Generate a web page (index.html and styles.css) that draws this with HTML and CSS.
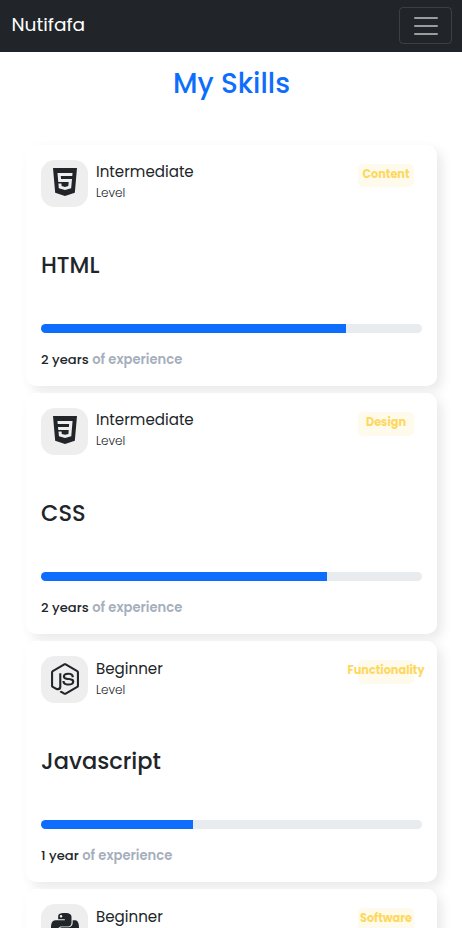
FILE: index.html
```html
<!DOCTYPE html>
<html lang="en">
<head>
<meta charset="utf-8">
<title>My Skills</title>
<link rel="stylesheet" href="styles.css">
</head>
<body>
<nav class="navbar">
  <a class="brand">Nutifafa</a>
  <button class="toggler" aria-label="Menu">
    <svg viewBox="0 0 30 30"><path stroke="currentColor" stroke-linecap="round" stroke-miterlimit="10" stroke-width="2" d="M4 7h22M4 15h22M4 23h22"/></svg>
  </button>
</nav>
<main>
  <h1 class="title">My Skills</h1>
  <div class="cards">
    <article class="card">
      <header class="head">
        <div class="icon"><svg viewBox="0 0 384 512"><path d="M0 32l34.9 395.8L191.5 480l157.6-52.2L384 32H0zm308.2 127.9H124.4l4.1 49.4h175.6l-13.6 148.4-97.9 27v.3h-1.1l-98.7-27.3-6-75.8h47.7L138 320l53.5 14.5 53.7-14.5 6-62.2H84.3L71.5 112.2h241.1l-4.4 47.7z"/></svg></div>
        <div class="details"><h6 class="grade">Intermediate</h6><p class="level">Level</p></div>
        <div class="badge">Content</div>
      </header>
      <h3 class="name">HTML</h3>
      <div class="progress"><div class="bar" style="width:80%"></div></div>
      <p class="exp">2 years <span>of experience</span></p>
    </article>
    <article class="card">
      <header class="head">
        <div class="icon"><svg viewBox="0 0 384 512"><path fill-rule="evenodd" d="M0 32l34.9 395.8L192 480l157.1-52.2L384 32H0zM71 112H313L292 355 193 384 95 355 88 281H137L140 319 193 333 247 318 251 257H84L80 209H254L258 159H75z"/></svg></div>
        <div class="details"><h6 class="grade">Intermediate</h6><p class="level">Level</p></div>
        <div class="badge">Design</div>
      </header>
      <h3 class="name">CSS</h3>
      <div class="progress"><div class="bar" style="width:75%"></div></div>
      <p class="exp">2 years <span>of experience</span></p>
    </article>
    <article class="card lower">
      <header class="head">
        <div class="icon"><svg viewBox="0 0 448 512"><path d="M224 508c-6.7 0-13.5-1.8-19.4-5.2l-61.7-36.5c-9.2-5.2-4.7-7-1.7-8 12.3-4.3 14.8-5.2 27.9-12.7 1.4-.8 3.2-.5 4.6.4l47.4 28.1c1.7 1 4.1 1 5.7 0l184.7-106.6c1.7-1 2.8-3 2.8-5V149.3c0-2.1-1.1-4-2.9-5.1L226.8 37.7c-1.7-1-4-1-5.7 0L36.6 144.3c-1.8 1-2.9 3-2.9 5.1v213.1c0 2 1.1 4 2.9 4.9l50.6 29.2c27.5 13.7 44.3-2.4 44.3-18.7V167.5c0-3 2.4-5.3 5.4-5.3h23.4c2.9 0 5.4 2.3 5.4 5.3V378c0 36.6-20 57.6-54.7 57.6-10.7 0-19.1 0-42.5-11.6l-48.4-27.9C8.1 389.2.7 376.3.7 362.4V149.3c0-13.8 7.4-26.8 19.4-33.7L204.6 9c11.7-6.6 27.2-6.6 38.8 0l184.7 106.7c12 6.9 19.4 19.8 19.4 33.7v213.1c0 13.8-7.4 26.7-19.4 33.7L243.4 502.8c-5.9 3.4-12.6 5.2-19.4 5.2zm149.1-210.1c0-39.9-27-50.5-83.7-58-57.4-7.6-63.2-11.5-63.2-24.9 0-11.1 4.9-25.9 47.4-25.9 37.9 0 51.9 8.2 57.7 33.8.5 2.4 2.7 4.2 5.2 4.2h24c1.5 0 2.9-.6 3.9-1.7s1.5-2.6 1.4-4.1c-3.7-44.1-33-64.6-92.2-64.6-52.7 0-84.1 22.2-84.1 59.5 0 40.4 31.3 51.6 81.8 56.6 60.5 5.9 65.2 14.8 65.2 26.7 0 20.6-16.6 29.4-55.5 29.4-48.9 0-59.6-12.3-63.2-36.6-.4-2.6-2.6-4.5-5.3-4.5h-23.9c-3 0-5.3 2.4-5.3 5.3 0 31.1 16.9 68.2 97.8 68.2 58.4-.1 92-23.2 92-63.4z"/></svg></div>
        <div class="details"><h6 class="grade">Beginner</h6><p class="level">Level</p></div>
        <div class="badge">Functionality</div>
      </header>
      <h3 class="name">Javascript</h3>
      <div class="progress"><div class="bar" style="width:40%"></div></div>
      <p class="exp">1 year <span>of experience</span></p>
    </article>
    <article class="card lower">
      <header class="head">
        <div class="icon"><svg viewBox="0 0 448 512"><path d="M439.8 200.5c-7.7-30.9-22.3-54.2-53.4-54.2h-40.1v47.4c0 36.8-31.2 67.8-66.8 67.8H172.7c-29.2 0-53.4 25-53.4 54.3v101.8c0 29 25.2 46 53.4 54.3 33.8 9.9 66.3 11.7 106.8 0 26.9-7.8 53.4-23.5 53.4-54.3v-40.7H226.2v-13.6h160.2c31.1 0 42.6-21.7 53.4-54.2 11.2-33.5 10.7-65.7 0-108.6zM286.2 404c11.1 0 20.1 9.1 20.1 20.3 0 11.3-9 20.4-20.1 20.4-11 0-20.1-9.2-20.1-20.4.1-11.3 9.1-20.3 20.1-20.3zM167.8 248.1h106.8c29.7 0 53.4-24.5 53.4-54.3V91.9c0-29-24.4-50.7-53.4-55.6-35.8-5.9-74.7-5.6-106.8.1-45.2 8-53.4 24.7-53.4 55.6v40.7h106.9v13.6h-147c-31.1 0-58.3 18.7-66.8 54.2-9.8 40.7-10.2 66.1 0 108.6 7.6 31.6 25.7 54.2 56.8 54.2H101v-48.8c0-35.3 30.5-66.4 66.8-66.4zm-6.7-142.6c-11.1 0-20.1-9.1-20.1-20.3.1-11.3 9-20.4 20.1-20.4 11 0 20.1 9.2 20.1 20.4s-9 20.3-20.1 20.3z"/></svg></div>
        <div class="details"><h6 class="grade">Beginner</h6></div>
        <div class="badge">Software</div>
      </header>
    </article>
  </div>
</main>
</body>
</html>
```
FILE: styles.css
```css
* { box-sizing: border-box; }
html { height: 928px; overflow: hidden; }
body {
  margin: 0;
  height: 928px;
  overflow: hidden;
  background: #fff;
  color: #212529;
  font-family: Poppins, Inter, "Liberation Sans", sans-serif;
}
h1, h3, h6, p { margin: 0; }
.navbar {
  height: 52px;
  padding: 0 10px 1px 11.5px;
  display: flex;
  align-items: center;
  justify-content: space-between;
  background: #212529;
}
.brand { color: #fff; font-size: 18.6px; line-height: 28px; padding-bottom: 2px; }
.toggler {
  width: 53px;
  height: 37px;
  padding: 0;
  display: flex;
  align-items: center;
  justify-content: center;
  background: none;
  border: 1px solid rgba(255, 255, 255, .12);
  border-radius: 4px;
  color: rgba(255, 255, 255, .55);
}
.toggler svg { width: 30px; height: 30px; display: block; }
.title {
  padding: 13px 0 0 1px;
  height: 93px;
  text-align: center;
  color: #0d6efd;
  font-size: 27.8px;
  font-weight: 500;
  line-height: 38px;
}
.cards { display: flex; flex-direction: column; gap: 7px; padding: 0 25px 0 26px; }
.card {
  height: 241px;
  flex: none;
  padding: 15px 15px 0;
  border-radius: 10px;
  background: #fff;
  box-shadow: 5px 5px 12px rgba(0, 0, 0, .09);
}
.head { display: flex; height: 47px; }
.icon {
  width: 47px;
  height: 47px;
  border-radius: 14px;
  background: #eee;
  display: flex;
  justify-content: center;
  padding-top: 6px;
}
.icon svg { height: 32px; display: block; fill: #212529; }
.lower .icon { padding-top: 7px; }
.details { margin-left: 8px; flex: 1; }
.grade { font-size: 15.1px; font-weight: 400; line-height: 20px; padding-top: 2px; }
.lower .grade { padding-top: 3px; }
.level { font-size: 12px; font-weight: 300; line-height: 18px; padding-top: 2px; }
.badge {
  width: 56px;
  height: 23px;
  margin: 4px 8px 0 0;
  padding-bottom: 3px;
  display: flex;
  justify-content: center;
  align-items: center;
  border-radius: 5px;
  background: #fffbec;
  color: #fed85d;
  font-size: 11.3px;
  font-weight: 700;
}
.card + .card .badge { height: 24px; }
.name { padding-top: 43px; height: 117px; font-size: 22.5px; font-weight: 500; line-height: 30px; }
.progress { height: 9px; border-radius: 5px; background: #e9ecef; overflow: hidden; }
.bar { height: 9px; background: #0d6efd; }
.exp { padding-top: 17px; font-size: 13.1px; font-weight: 500; line-height: 20px; letter-spacing: .03px; }
.exp span { font-weight: 600; color: #a5aebc; }
```
